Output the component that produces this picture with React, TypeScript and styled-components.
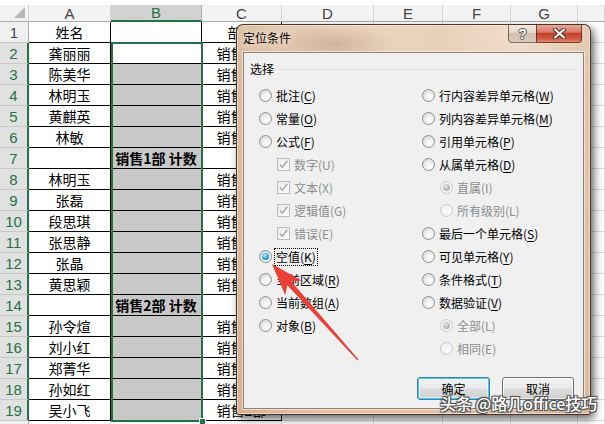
import { Fragment } from "react";
import styled, { createGlobalStyle, css } from "styled-components";

const GREEN = "#217346";

const GlobalStyle = createGlobalStyle`
  * { box-sizing: border-box; }
  html, body { margin: 0; padding: 0; background: #fff; overflow: hidden; }
  body { font-family: "Noto Sans CJK SC", "Liberation Sans", sans-serif; }
`;

const names = [
  "姓名", "龚丽丽", "陈美华", "林明玉", "黄麒英", "林敏", "",
  "林明玉", "张磊", "段思琪", "张思静", "张晶", "黄思颖", "",
  "孙令煊", "刘小红", "郑菁华", "孙如红", "吴小飞",
];

const rows = names.map((a, i) => {
  const r = i + 1;
  let b = "";
  let c = "";
  if (r === 1) c = "部门";
  else if (r === 7) b = "销售1部 计数";
  else if (r === 14) b = "销售2部 计数";
  else c = r < 14 ? "销售1部" : "销售2部";
  return { a, b, c };
});

const columns = ["A", "B", "C", "D", "E", "F", "G", ""];

type Opt = {
  text: string;
  key: string;
  kind: "radio" | "check";
  sub?: boolean;
  on?: boolean;
  off?: boolean;
  focus?: boolean;
};

const leftOpts: Opt[] = [
  { text: "批注", key: "C", kind: "radio" },
  { text: "常量", key: "O", kind: "radio" },
  { text: "公式", key: "F", kind: "radio" },
  { text: "数字", key: "U", kind: "check", sub: true, on: true, off: true },
  { text: "文本", key: "X", kind: "check", sub: true, on: true, off: true },
  { text: "逻辑值", key: "G", kind: "check", sub: true, on: true, off: true },
  { text: "错误", key: "E", kind: "check", sub: true, on: true, off: true },
  { text: "空值", key: "K", kind: "radio", on: true, focus: true },
  { text: "当前区域", key: "R", kind: "radio" },
  { text: "当前数组", key: "A", kind: "radio" },
  { text: "对象", key: "B", kind: "radio" },
];

const rightOpts: Opt[] = [
  { text: "行内容差异单元格", key: "W", kind: "radio" },
  { text: "列内容差异单元格", key: "M", kind: "radio" },
  { text: "引用单元格", key: "P", kind: "radio" },
  { text: "从属单元格", key: "D", kind: "radio" },
  { text: "直属", key: "I", kind: "radio", sub: true, on: true, off: true },
  { text: "所有级别", key: "L", kind: "radio", sub: true, off: true },
  { text: "最后一个单元格", key: "S", kind: "radio" },
  { text: "可见单元格", key: "Y", kind: "radio" },
  { text: "条件格式", key: "T", kind: "radio" },
  { text: "数据验证", key: "V", kind: "radio" },
  { text: "全部", key: "L", kind: "radio", sub: true, on: true, off: true },
  { text: "相同", key: "E", kind: "radio", sub: true, off: true },
];

// arrow polygon, tail at bottom right, tip at the 空值 radio
const tip = { x: 272, y: 264 };
const tail = { x: 358, y: 360 };
const arrowPoints = (() => {
  const dx = tip.x - tail.x;
  const dy = tip.y - tail.y;
  const len = Math.hypot(dx, dy);
  const u = { x: dx / len, y: dy / len };
  const n = { x: -u.y, y: u.x };
  const at = (back: number, side: number) =>
    `${(tip.x - u.x * back + n.x * side).toFixed(1)},${(tip.y - u.y * back + n.y * side).toFixed(1)}`;
  return [
    at(0, 0),
    at(32, 11),
    at(26, 2.8),
    at(len, 0.7),
    at(len, -0.7),
    at(26, -2.8),
    at(32, -11),
  ].join(" ");
})();

export default function App() {
  return (
    <Screen>
      <GlobalStyle />
      <Sheet>
        <TopStrip />
        <Corner />
        {columns.map((l, i) => (
          <ColHeader key={i} $active={l === "B"}>{l}</ColHeader>
        ))}
        {rows.map((row, i) => (
          <Fragment key={i}>
            <RowHeader $active={i > 0}>{i + 1}</RowHeader>
            <Cell $table>{row.a}</Cell>
            <Cell $table $shade={i > 1} $bold>{row.b}</Cell>
            <Cell $table>{row.c}</Cell>
            {[0, 1, 2, 3, 4].map((k) => (
              <Cell key={k} />
            ))}
          </Fragment>
        ))}
        <RowHeader />
        {[0, 1, 2, 3, 4, 5, 6, 7].map((k) => (
          <Cell key={k} />
        ))}
      </Sheet>

      <Selection>
        <FillHandle />
      </Selection>

      <Dialog>
        <TitleBar>
          <Title>定位条件</Title>
          <CaptionButtons>
            <HelpButton>?</HelpButton>
            <CloseButton>
              <svg width="13" height="11" viewBox="0 0 13 11">
                <path d="M2 1.5 L11 9.5 M11 1.5 L2 9.5" stroke="#5a2a22" strokeWidth="4.2" strokeLinecap="round" />
                <path d="M2 1.5 L11 9.5 M11 1.5 L2 9.5" stroke="#fff" strokeWidth="2.2" strokeLinecap="round" />
              </svg>
            </CloseButton>
          </CaptionButtons>
        </TitleBar>

        <Client>
          <GroupHeader>
            <GroupLabel>选择</GroupLabel>
            <GroupLine />
          </GroupHeader>

          <Columns>
            <OptionList $width={163}>
              {leftOpts.map((o, i) => (
                <Option key={i} opt={o} />
              ))}
            </OptionList>
            <OptionList>
              {rightOpts.map((o, i) => (
                <Option key={i} opt={o} />
              ))}
            </OptionList>
          </Columns>

          <ButtonRow>
            <Button $default $width={73}>确定</Button>
            <Button $width={72}>取消</Button>
          </ButtonRow>
        </Client>
      </Dialog>

      <Arrow width="605" height="424" viewBox="0 0 605 424">
        <polygon points={arrowPoints} fill="#ea4035" />
      </Arrow>

      <Watermark>头条 @路几office技巧</Watermark>
    </Screen>
  );
}

function Option({ opt }: { opt: Opt }) {
  return (
    <OptionRow $sub={opt.sub}>
      {opt.kind === "radio" ? (
        <Radio $on={opt.on} $off={opt.off} />
      ) : (
        <Check $off={opt.off}>
          {opt.on && (
            <svg width="11" height="11" viewBox="0 0 11 11">
              <path d="M1.8 5.6 L4.3 8.2 L9.3 1.8" fill="none" stroke="#a8a8a8" strokeWidth="1.5" />
            </svg>
          )}
        </Check>
      )}
      <OptionLabel $off={opt.off} $focus={opt.focus}>
        {opt.text}(
        {opt.off ? opt.key : <u>{opt.key}</u>})
      </OptionLabel>
    </OptionRow>
  );
}

const Screen = styled.div`
  position: relative;
  width: 605px;
  height: 424px;
  overflow: hidden;
  background: #fff;
`;

const Sheet = styled.div`
  display: grid;
  grid-template-columns: 29px 82px 91px 80px 92px 69px 68px 67px 1fr;
  grid-template-rows: 5px 17px repeat(20, 21px);
  font-family: "Noto Sans CJK SC", sans-serif;
  font-size: 14px;
  color: #000;
`;

const TopStrip = styled.div`
  grid-column: 1 / -1;
  background: #fff;
`;

const Corner = styled.div`
  display: flex;
  align-items: flex-end;
  justify-content: flex-end;
  padding: 0 3px 3px 0;
  background: #f3f3f3;
  border-right: 1px solid #d4d4d4;
  border-bottom: 1px solid #ababab;

  &::after {
    content: "";
    width: 0;
    height: 0;
    border-left: 11px solid transparent;
    border-bottom: 11px solid #b8b8b8;
  }
`;

const ColHeader = styled.div<{ $active?: boolean }>`
  display: flex;
  align-items: center;
  justify-content: center;
  font-family: "Liberation Sans", sans-serif;
  font-size: 15px;
  color: #444;
  background: #f3f3f3;
  border-right: 1px solid #d4d4d4;
  border-bottom: 1px solid #ababab;

  ${(p) =>
    p.$active &&
    css`
      background: #d2d2d2;
      color: ${GREEN};
      border-bottom: 2px solid ${GREEN};
      border-right-color: #ababab;
    `}
`;

const RowHeader = styled.div<{ $active?: boolean }>`
  display: flex;
  align-items: center;
  justify-content: center;
  font-family: "Liberation Sans", sans-serif;
  font-size: 15px;
  color: ${(p) => (p.$active ? GREEN : "#444")};
  background: ${(p) => (p.$active ? "#e1e1e1" : "#f0f0f0")};
  border-bottom: 1px solid #c8c8c8;
  border-right: ${(p) => (p.$active ? `2px solid ${GREEN}` : "1px solid #ababab")};
`;

const Cell = styled.div<{ $table?: boolean; $shade?: boolean; $bold?: boolean }>`
  display: flex;
  align-items: center;
  justify-content: center;
  white-space: nowrap;
  overflow: hidden;
  line-height: 20px;
  font-weight: ${(p) => (p.$bold ? 700 : 400)};
  background: ${(p) => (p.$shade ? "#c8c8c8" : "#fff")};
  border-right: 1px solid ${(p) => (p.$table ? "#000" : "#dadada")};
  border-bottom: 1px solid ${(p) => (p.$table ? "#000" : "#dadada")};
`;

const Selection = styled.div`
  position: absolute;
  left: 111px;
  top: 42px;
  width: 92px;
  height: 380px;
  border: 2px solid ${GREEN};
  display: flex;
  align-items: flex-end;
  justify-content: flex-end;
`;

const FillHandle = styled.div`
  width: 7px;
  height: 7px;
  margin: 0 -5px -5px 0;
  background: ${GREEN};
  border: 1px solid #fff;
`;

const Dialog = styled.div`
  position: absolute;
  left: 236px;
  top: 24px;
  width: 355px;
  height: 391px;
  display: flex;
  flex-direction: column;
  padding: 0 6px 5px 6px;
  border: 1px solid rgba(45, 30, 20, 0.85);
  border-radius: 7px 7px 3px 3px;
  background:
    radial-gradient(ellipse 60px 22px at 28% 5%, rgba(160, 120, 90, 0.35), transparent),
    radial-gradient(ellipse 80px 40px at 80% 3%, rgba(255, 238, 222, 0.55), transparent),
    linear-gradient(90deg, rgba(200, 160, 128, 0.45), rgba(240, 218, 198, 0.15) 30%, rgba(214, 178, 150, 0.4) 100%),
    linear-gradient(180deg, #edd6c2 0%, #e8ccb5 50%, #e2c1a7 100%);
  box-shadow:
    3px 4px 9px rgba(0, 0, 0, 0.6),
    inset 0 0 0 1px rgba(255, 240, 228, 0.5);
`;

const TitleBar = styled.div`
  height: 27px;
  display: flex;
  align-items: flex-start;
`;

const Title = styled.div`
  flex: 1;
  margin-top: 5px;
  font-size: 12px;
  line-height: 16px;
  color: #000;
  text-shadow: 0 0 6px rgba(255, 245, 235, 0.9), 0 0 10px rgba(255, 245, 235, 0.7);
`;

const CaptionButtons = styled.div`
  display: flex;
  margin-right: 2px;
`;

const HelpButton = styled.div`
  width: 28px;
  height: 18px;
  display: flex;
  align-items: center;
  justify-content: center;
  font-family: "Liberation Sans", sans-serif;
  font-weight: 700;
  font-size: 14px;
  color: #f7f7f7;
  text-shadow: 1px 0 0 #555, -1px 0 0 #555, 0 1px 0 #555, 0 -1px 0 #555;
  border: 1px solid rgba(70, 50, 40, 0.65);
  border-top: none;
  border-right: none;
  border-radius: 0 0 0 4px;
  background: linear-gradient(180deg, #f2e6dc 0%, #e6d6c8 45%, #d2bfae 50%, #dacabc 100%);
`;

const CloseButton = styled.div`
  width: 46px;
  height: 18px;
  display: flex;
  align-items: center;
  justify-content: center;
  border: 1px solid rgba(80, 30, 20, 0.75);
  border-top: none;
  border-radius: 0 0 4px 0;
  background: linear-gradient(180deg, #e9a898 0%, #d97a66 42%, #c5402a 50%, #cf5a40 80%, #de8a6e 100%);
`;

const Client = styled.div`
  flex: 1;
  display: flex;
  flex-direction: column;
  padding: 8px 8px 8px 6px;
  background: #f0f0f0;
  border: 1px solid #8e8277;
  box-shadow: 0 0 0 1px rgba(255, 246, 238, 0.6);
  font-size: 12px;
  color: #000;
`;

const GroupHeader = styled.div`
  height: 16px;
  display: flex;
  align-items: center;
`;

const GroupLabel = styled.span`
  line-height: 16px;
`;

const GroupLine = styled.div`
  flex: 1;
  height: 1px;
  margin-left: 5px;
  background: #d5dfe5;
`;

const Columns = styled.div`
  display: flex;
  margin-top: 7px;
  padding-left: 9px;
`;

const OptionList = styled.div<{ $width?: number }>`
  display: flex;
  flex-direction: column;
  width: ${(p) => (p.$width ? `${p.$width}px` : "auto")};
  flex: ${(p) => (p.$width ? "none" : 1)};
`;

const OptionRow = styled.div<{ $sub?: boolean }>`
  height: 23px;
  display: flex;
  align-items: center;
  gap: 4px;
  padding-left: ${(p) => (p.$sub ? 18 : 0)}px;
`;

const Radio = styled.span<{ $on?: boolean; $off?: boolean }>`
  flex: none;
  width: 13px;
  height: 13px;
  border-radius: 50%;
  display: inline-flex;
  align-items: center;
  justify-content: center;
  border: 1px solid ${(p) => (p.$off ? "#c9c9c9" : "#8c8e8f")};
  background: ${(p) =>
    p.$off
      ? "radial-gradient(circle at 60% 65%, #fafafa, #ececec)"
      : "radial-gradient(circle at 62% 68%, #ffffff 0%, #f3f3f3 35%, #cfcfcf 100%)"};

  &::after {
    content: "";
    width: 7px;
    height: 7px;
    border-radius: 50%;
    display: ${(p) => (p.$on ? "block" : "none")};
    background: ${(p) =>
      p.$off
        ? "radial-gradient(circle at 40% 35%, #e6e6e6 0%, #b5b5b5 60%, #9a9a9a 100%)"
        : "radial-gradient(circle at 40% 35%, #bdf0ff 0%, #2fa6e4 50%, #0b5793 100%)"};
  }
`;

const Check = styled.span<{ $off?: boolean }>`
  flex: none;
  width: 13px;
  height: 13px;
  display: inline-flex;
  align-items: center;
  justify-content: center;
  border: 1px solid ${(p) => (p.$off ? "#bcbcbc" : "#8e8f8f")};
  background: linear-gradient(135deg, #ececec, #fbfbfb);
`;

const OptionLabel = styled.span<{ $off?: boolean; $focus?: boolean }>`
  white-space: nowrap;
  line-height: 16px;
  color: ${(p) => (p.$off ? "#8d8d8d" : "#000")};
  outline: ${(p) => (p.$focus ? "1px dotted #000" : "none")};
  padding: 0 1px;
  margin-left: -1px;

  u {
    text-underline-offset: 2px;
  }
`;

const ButtonRow = styled.div`
  margin-top: auto;
  display: flex;
  justify-content: flex-end;
  gap: 12px;
  margin-right: 1px;
`;

const Button = styled.div<{ $default?: boolean; $width: number }>`
  width: ${(p) => p.$width}px;
  height: 23px;
  display: flex;
  align-items: center;
  justify-content: center;
  border-radius: 3px;
  font-size: 12px;
  border: 1px solid ${(p) => (p.$default ? "#3c7fb1" : "#707070")};
  background: linear-gradient(180deg, #f2f2f2 0%, #ebebeb 48%, #dddddd 52%, #cfcfcf 100%);
  box-shadow: ${(p) =>
    p.$default ? "inset 0 0 0 1px #48c8f5, inset 0 0 0 2px rgba(255,255,255,0.5)" : "inset 0 0 0 1px rgba(255,255,255,0.7)"};
`;

const Arrow = styled.svg`
  position: absolute;
  left: 0;
  top: 0;
  pointer-events: none;
`;

const Watermark = styled.div`
  position: absolute;
  left: 440px;
  top: 393px;
  font-family: "Noto Sans CJK SC", sans-serif;
  font-size: 16px;
  line-height: 20px;
  font-weight: 500;
  color: #fff;
  white-space: nowrap;
  text-shadow:
    1px 1px 0 #555,
    -1px -1px 0 #555,
    1px -1px 0 #555,
    -1px 1px 0 #555,
    0 0 3px rgba(0, 0, 0, 0.5);
`;
